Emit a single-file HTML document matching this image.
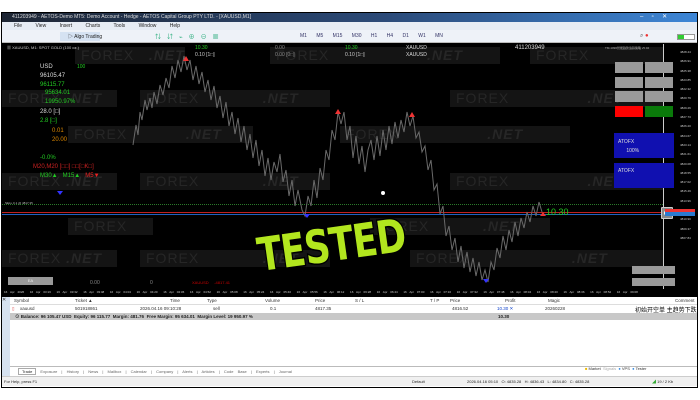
<!DOCTYPE html>
<html><head><meta charset="utf-8"><style>
*{margin:0;padding:0;box-sizing:border-box}
body{width:700px;height:400px;background:#fff;position:relative;overflow:hidden;font-family:"Liberation Sans","Noto Sans CJK SC",sans-serif;font-size:5px}
.a{position:absolute;white-space:nowrap}
.wm{position:absolute;background:#141414;color:#262626;font-size:14px;height:17px;line-height:17px;padding-left:6px;letter-spacing:1px}
.btn{position:absolute;background:#9a9a9a;width:28px;height:11px}
.th{position:absolute;top:1px;color:#333}
</style></head><body>
<div class="a" style="left:1px;top:12px;width:697px;height:376px;background:#000"></div>
<div class="a" style="left:2px;top:13px;width:695px;height:9px;background:linear-gradient(90deg,#1d2533 0%,#2b4a78 55%,#3d86d6 100%)"></div>
<div class="a" style="left:12px;top:14px;color:#ddd;font-size:5px">411203949 - AETOS-Demo MT5: Demo Account - Hedge - AETOS Capital Group PTY LTD. - [XAUUSD,M1]</div>
<div class="a" style="left:640px;top:13px;color:#fff;font-size:6px">–&nbsp;&nbsp;&nbsp;&nbsp;&nbsp;▫&nbsp;&nbsp;&nbsp;&nbsp;&nbsp;✕</div>
<div class="a" style="left:2px;top:22px;width:695px;height:8px;background:#e6ecf4"></div>
<div class="a" style="left:14px;top:23px;color:#222;font-size:5px;word-spacing:12px">File View Insert Charts Tools Window Help</div>
<div class="a" style="left:2px;top:30px;width:695px;height:13px;background:#eef2f8;border-bottom:1px solid #bbb"></div>
<div class="a" style="left:60px;top:32px;width:40px;height:9px;background:#d5e2f2"></div>
<div class="a" style="left:68px;top:33px;color:#222;font-size:5px">▷ Algo Trading</div>
<div class="a" style="left:155px;top:32px;color:#2a7;font-size:6px;letter-spacing:6px">⇅⇵⌁⊕⊖▦</div>
<div class="a" style="left:300px;top:33px;color:#336;font-size:5px;word-spacing:8px">M1 M5 M15 M30 H1 H4 D1 W1 MN</div>
<div class="a" style="left:640px;top:33px;color:#555;font-size:6px">⌕ <span style="color:#e33">●</span></div>
<div class="a" style="left:677px;top:34px;width:18px;height:6px;background:#fff;border:1px solid #999"><div style="width:6px;height:4px;background:#3c3"></div></div>
<div class="a" style="left:2px;top:44px;width:695px;height:253px;background:#000"></div>
<div class="a" style="left:663px;top:44px;width:1px;height:245px;background:#ccc"></div>
<div class="wm" style="left:75px;top:47px;width:110px">FOREX &nbsp;&nbsp;<i><b>.NET</b></i></div>
<div class="wm" style="left:270px;top:47px;width:230px">FOREX &nbsp;&nbsp;&nbsp;&nbsp;&nbsp;&nbsp;&nbsp;&nbsp;&nbsp;&nbsp;&nbsp;&nbsp;&nbsp;&nbsp;&nbsp;&nbsp;&nbsp;&nbsp;&nbsp;<i><b>.NET</b></i></div>
<div class="wm" style="left:530px;top:47px;width:133px">FOREX</div>
<div class="wm" style="left:2px;top:90px;width:115px">FOREX <i><b>.NET</b></i></div>
<div class="wm" style="left:140px;top:90px;width:190px">FOREX &nbsp;&nbsp;&nbsp;&nbsp;&nbsp;&nbsp;&nbsp;&nbsp;&nbsp;&nbsp;&nbsp;&nbsp;<i><b>.NET</b></i></div>
<div class="wm" style="left:450px;top:90px;width:213px">FOREX &nbsp;&nbsp;&nbsp;&nbsp;&nbsp;&nbsp;&nbsp;&nbsp;&nbsp;&nbsp;&nbsp;&nbsp;&nbsp;&nbsp;&nbsp;<i><b>.NET</b></i></div>
<div class="wm" style="left:68px;top:126px;width:185px">FOREX &nbsp;&nbsp;&nbsp;&nbsp;&nbsp;&nbsp;&nbsp;&nbsp;&nbsp;&nbsp;&nbsp;<i><b>.NET</b></i></div>
<div class="wm" style="left:340px;top:126px;width:230px">FOREX &nbsp;&nbsp;&nbsp;&nbsp;&nbsp;&nbsp;&nbsp;&nbsp;&nbsp;&nbsp;&nbsp;&nbsp;&nbsp;&nbsp;&nbsp;&nbsp;&nbsp;<i><b>.NET</b></i></div>
<div class="wm" style="left:2px;top:173px;width:115px">FOREX <i><b>.NET</b></i></div>
<div class="wm" style="left:140px;top:173px;width:190px">FOREX &nbsp;&nbsp;&nbsp;&nbsp;&nbsp;&nbsp;&nbsp;&nbsp;&nbsp;&nbsp;&nbsp;&nbsp;<i><b>.NET</b></i></div>
<div class="wm" style="left:450px;top:173px;width:213px">FOREX &nbsp;&nbsp;&nbsp;&nbsp;&nbsp;&nbsp;&nbsp;&nbsp;&nbsp;&nbsp;&nbsp;&nbsp;&nbsp;&nbsp;&nbsp;<i><b>.NET</b></i></div>
<div class="wm" style="left:68px;top:218px;width:85px">FOREX</div>
<div class="wm" style="left:370px;top:218px;width:180px">FOREX &nbsp;&nbsp;&nbsp;&nbsp;&nbsp;&nbsp;&nbsp;&nbsp;&nbsp;&nbsp;<i><b>.NET</b></i></div>
<div class="wm" style="left:2px;top:250px;width:115px">FOREX <i><b>.NET</b></i></div>
<div class="wm" style="left:140px;top:250px;width:190px">FOREX &nbsp;&nbsp;&nbsp;&nbsp;&nbsp;&nbsp;&nbsp;&nbsp;&nbsp;&nbsp;&nbsp;&nbsp;<i><b>.NET</b></i></div>
<div class="wm" style="left:410px;top:250px;width:253px">FOREX &nbsp;&nbsp;&nbsp;&nbsp;&nbsp;&nbsp;&nbsp;&nbsp;&nbsp;&nbsp;&nbsp;&nbsp;&nbsp;&nbsp;&nbsp;&nbsp;&nbsp;&nbsp;&nbsp;&nbsp;<i><b>.NET</b></i></div>
<div class="a" style="left:2px;top:204px;width:661px;border-top:1px dotted #2a7a2a"></div>
<div class="a" style="left:2px;top:212px;width:661px;height:1px;background:#c02020"></div>
<div class="a" style="left:2px;top:214px;width:661px;height:1px;background:#2060c0"></div>
<svg class="a" style="left:0;top:0" width="700" height="400">
<polyline fill="none" stroke="#6a6a6a" stroke-width="1" points="133,145 136,125 138,135 140,112 142,120 145,100 147,110 150,98 152,108 154,92 157,104 160,85 163,95 166,78 169,88 172,66 175,78 178,60 181,72 184,56 187,70 190,60 193,80 196,66 199,84 202,72 205,92 208,80 211,100 214,86 217,108 220,96 223,118 226,102 229,126 232,112 235,134 238,118 241,142 244,126 247,150 250,134 253,158 256,140 259,166 262,150 265,176 268,158 271,180 274,162 277,172 280,154 283,182 286,170 289,196 292,180 295,206 298,190 302,210 305,216 308,196 311,206 314,180 317,198 320,168 323,180 326,150 329,160 332,130 335,140 338,112 341,124 344,112 347,140 350,126 353,158 356,136 359,164 362,146 365,172 368,150 371,140 374,160 377,136 380,156 383,130 386,150 389,126 392,144 395,122 398,138 401,120 404,132 407,112 410,126 413,116 416,138 419,132 422,152 425,146 428,170 431,160 434,190 437,184 440,214 443,206 446,236 449,226 452,250 455,238 458,262 461,246 464,268 467,252 470,272 473,258 476,276 479,262 482,280 485,270 488,282 491,262 494,270 497,248 500,258 503,236 506,250 509,230 512,242 515,222 518,236 521,218 524,228 527,212 530,222 533,206 536,216 539,202 542,212"/>
<circle cx="383" cy="193" r="2" fill="#fff"/>
<path d="M186 56 l-3 5 h6 z" fill="#e33"/><path d="M338 109 l-3 5 h6 z" fill="#e33"/><path d="M412 112 l-3 5 h6 z" fill="#e33"/><path d="M543 212 l-3 4 h6 z" fill="#e33"/>
<path d="M60 195 l-3 -4 h6 z" fill="#33f"/><path d="M307 218 l-3 -4 h6 z" fill="#33f"/><path d="M486 283 l-3 -4 h6 z" fill="#33f"/>
</svg>
<div class="a" style="left:7px;top:45px;color:#ccc;font-size:4px">▦ XAUUSD, M1: SPOT GOLD (100 oz.)</div>
<div class="a" style="left:195px;top:45px;color:#2c2;font-size:5px">10.30</div>
<div class="a" style="left:195px;top:52px;color:#ccc;font-size:5px">0.10 [1□]</div>
<div class="a" style="left:275px;top:45px;color:#888;font-size:5px">0.00</div>
<div class="a" style="left:275px;top:52px;color:#888;font-size:5px">0.00 [0□]</div>
<div class="a" style="left:345px;top:45px;color:#2c2;font-size:5px">10.30</div>
<div class="a" style="left:345px;top:52px;color:#ccc;font-size:5px">0.10 [1□]</div>
<div class="a" style="left:406px;top:45px;color:#ddd;font-size:5px">XAUUSD</div>
<div class="a" style="left:406px;top:52px;color:#ddd;font-size:5px">XAUUSD</div>
<div class="a" style="left:515px;top:45px;color:#ddd;font-size:6px">411203949</div>
<div class="a" style="left:605px;top:46px;color:#aaa;font-size:3px">TM-1096智能趋势追踪策略 v5.04</div>
<div class="a" style="left:40px;top:64px;color:#ddd;font-size:6px">USD</div>
<div class="a" style="left:77px;top:64px;color:#2c2;font-size:5px">100</div>
<div class="a" style="left:40px;top:73px;color:#ddd;font-size:6px">96105.47</div>
<div class="a" style="left:40px;top:82px;color:#2c2;font-size:6px">96115.77</div>
<div class="a" style="left:45px;top:90px;color:#2c2;font-size:6px">95634.01</div>
<div class="a" style="left:45px;top:99px;color:#2c2;font-size:6px">19950.97%</div>
<div class="a" style="left:40px;top:109px;color:#ddd;font-size:6px">28.0 [□]</div>
<div class="a" style="left:40px;top:118px;color:#2c2;font-size:6px">2.8 [□]</div>
<div class="a" style="left:52px;top:128px;color:#d80;font-size:6px">0.01</div>
<div class="a" style="left:52px;top:137px;color:#d80;font-size:6px">20.00</div>
<div class="a" style="left:40px;top:155px;color:#2c2;font-size:6px">-0.0%</div>
<div class="a" style="left:33px;top:164px;color:#c22;font-size:6px">M20,M20 [□□] □□[□K□]</div>
<div class="a" style="left:40px;top:173px;color:#2c2;font-size:6px">M30▲&nbsp;&nbsp; M15▲&nbsp;&nbsp; <span style="color:#e22">M5▼</span></div>
<div class="a" style="left:5px;top:201px;color:#bbb;font-size:3px">SELL 0.1 @ 4817.35</div>
<div class="btn" style="left:615px;top:62px"></div><div class="btn" style="left:645px;top:62px"></div>
<div class="btn" style="left:615px;top:77px"></div><div class="btn" style="left:645px;top:77px"></div>
<div class="btn" style="left:615px;top:91px"></div><div class="btn" style="left:645px;top:91px"></div>
<div class="btn" style="left:615px;top:106px;background:#f00"></div><div class="btn" style="left:645px;top:106px;background:#0a7a0a"></div>
<div class="a" style="left:614px;top:133px;width:60px;height:25px;background:#1010b0;color:#ddd;font-size:5px;padding:5px 4px;line-height:9px">ATOFX<br>&nbsp;&nbsp;&nbsp;&nbsp;&nbsp;&nbsp;100%</div>
<div class="a" style="left:614px;top:163px;width:60px;height:25px;background:#1010b0;color:#ddd;font-size:5px;padding:5px 4px">ATOFX</div>
<div class="a" style="left:661px;top:207px;width:12px;height:12px;background:#888;border:1px solid #ccc;border-radius:1px"><div style="margin:2px;width:6px;height:6px;border:1px solid #fff;border-radius:50%"></div></div>
<div class="a" style="left:546px;top:207px;color:#2c2;font-size:9px">10.30</div>
<div class="btn" style="left:632px;top:266px;width:43px;height:8px"></div>
<div class="btn" style="left:632px;top:278px;width:43px;height:8px"></div>
<div class="a" style="left:8px;top:277px;width:45px;height:8px;background:#999;color:#eee;font-size:4px;text-align:center;line-height:8px">EA</div>
<div class="a" style="left:90px;top:280px;color:#888;font-size:5px">0.00</div>
<div class="a" style="left:150px;top:280px;color:#888;font-size:5px">0</div>
<div class="a" style="left:192px;top:280px;color:#c00;font-size:4px">XAUUSD &nbsp;&nbsp;&nbsp;&nbsp;-4817.41</div>
<div class="a" style="left:680px;top:48px;color:#ccc;font-size:3px;line-height:9.3px">4828.44<br>4826.91<br>4825.38<br>4823.85<br>4822.32<br>4820.79<br>4829.26<br>4827.73<br>4826.20<br>4824.67<br>4823.14<br>4821.61<br>4820.08<br>4818.55<br>4817.02<br>4815.49<br>4813.96<br>4812.43<br>4810.90<br>4809.37<br>4807.84</div>
<div class="a" style="left:665px;top:209px;width:30px;height:3px;background:#e33"></div>
<div class="a" style="left:665px;top:212px;width:30px;height:4px;background:#2a7ad0"></div>
<div class="a" style="left:4px;top:290px;color:#ccc;font-size:3px;word-spacing:2px">16 Apr 2026 &nbsp;16 Apr 03:16 &nbsp;16 Apr 03:32 &nbsp;16 Apr 03:48 &nbsp;16 Apr 04:04 &nbsp;16 Apr 04:20 &nbsp;16 Apr 04:36 &nbsp;16 Apr 04:52 &nbsp;16 Apr 05:08 &nbsp;16 Apr 05:24 &nbsp;16 Apr 05:40 &nbsp;16 Apr 05:56 &nbsp;16 Apr 06:12 &nbsp;16 Apr 06:28 &nbsp;16 Apr 06:44 &nbsp;16 Apr 07:00 &nbsp;16 Apr 07:16 &nbsp;16 Apr 07:32 &nbsp;16 Apr 07:48 &nbsp;16 Apr 08:04 &nbsp;16 Apr 08:20 &nbsp;16 Apr 08:36 &nbsp;16 Apr 08:52 &nbsp;16 Apr 09:08</div>
<div class="a" style="left:236px;top:218px;width:190px;text-align:center;font-size:46px;font-weight:900;color:#b2e61e;-webkit-text-stroke:3px #000;paint-order:stroke fill;transform:rotate(-8deg) scaleX(0.78);letter-spacing:-1px;font-family:'DejaVu Sans','Liberation Sans',sans-serif">TESTED</div>
<div class="a" style="left:2px;top:297px;width:695px;height:90px;background:#fff"></div>
<div class="a" style="left:2px;top:297px;width:8px;height:80px;background:#d6e2f0"></div>
<div class="a" style="left:2px;top:297px;color:#333;font-size:5px">✕</div>
<div class="a" style="left:10px;top:297px;width:687px;height:8px;border-bottom:1px solid #ddd;font-size:4.5px">
<span class="th" style="left:4px">Symbol</span><span class="th" style="left:65px">Ticket ▲</span><span class="th" style="left:160px">Time</span><span class="th" style="left:197px">Type</span><span class="th" style="left:255px">Volume</span><span class="th" style="left:305px">Price</span><span class="th" style="left:345px">S / L</span><span class="th" style="left:420px">T / P</span><span class="th" style="left:440px">Price</span><span class="th" style="left:495px">Profit</span><span class="th" style="left:538px">Magic</span><span class="th" style="left:665px">Comment</span></div>
<div class="a" style="left:10px;top:305px;width:687px;height:8px;font-size:4.5px;color:#333">
<span class="th" style="left:2px;color:#d44">▯</span><span class="th" style="left:10px">xauusd</span><span class="th" style="left:65px">501918861</span><span class="th" style="left:130px">2026.04.16 09:10:28</span><span class="th" style="left:203px">sell</span><span class="th" style="left:260px">0.1</span><span class="th" style="left:305px">4817.35</span><span class="th" style="left:442px">4816.52</span><span class="th" style="left:487px;color:#14c">10.30 ✕</span><span class="th" style="left:535px">20260228</span><span class="th" style="left:625px;top:0;font-size:6px;color:#000">初始开空单 主趋势下跌</span></div>
<div class="a" style="left:10px;top:313px;width:687px;height:7px;background:#c8c8c8;font-size:4.5px;font-weight:bold;color:#222;padding:1px 0 0 5px">⊙ Balance: 96 105.47 USD &nbsp;Equity: 96 115.77 &nbsp;Margin: 481.76 &nbsp;Free Margin: 95 634.01 &nbsp;Margin Level: 19 950.97 %<span style="position:absolute;left:488px">10.30</span></div>
<div class="a" style="left:10px;top:366px;width:687px;height:9px;border-top:1px solid #bbb;font-size:4px;color:#666;padding:2px 0 0 8px;word-spacing:3px"><span style="background:#fff;border:1px solid #aaa;padding:0 3px;color:#222">Trade</span> Exposure | History | News | Mailbox | Calendar | Company | Alerts | Articles | Code Base | Experts | Journal</div>
<div class="a" style="left:585px;top:366px;font-size:4px;color:#333"><span style="color:#eb0">■</span> Market &nbsp;<span style="color:#aaa">Signals</span> &nbsp;<span style="color:#38d">●</span> VPS &nbsp;<span style="color:#38d">●</span> Tester</div>
<div class="a" style="left:2px;top:376px;width:695px;height:10px;background:#f0f0f0;border-top:1px solid #ccc;font-size:4px;color:#222;padding:2px 0 0 2px">For Help, press F1
<span style="position:absolute;left:410px">Default</span><span style="position:absolute;left:465px">2026.04.16 05:10 &nbsp;&nbsp;O: 4835.28 &nbsp;&nbsp;H: 4836.43 &nbsp;&nbsp;L: 4834.80 &nbsp;&nbsp;C: 4835.28</span><span style="position:absolute;left:650px"><span style="color:#3a3">◢</span> 19 / 2 Kb</span></div>
</body></html>
